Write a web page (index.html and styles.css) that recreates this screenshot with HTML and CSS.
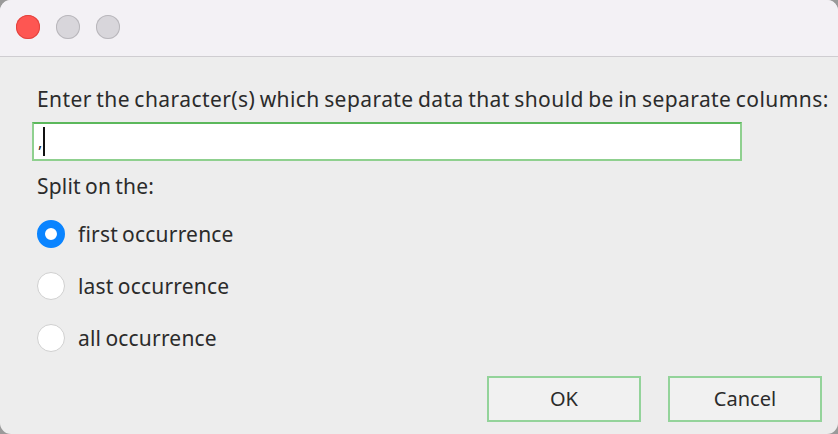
FILE: index.html
```html
<!DOCTYPE html>
<html lang="en">
<head>
  <meta charset="UTF-8">
  <title>Split Column</title>
  <link rel="stylesheet" href="styles.css">
</head>
<body>
  <div class="window">
    <!-- Title bar with traffic lights -->
    <div class="titlebar">
      <span class="light close"></span>
      <span class="light"></span>
      <span class="light"></span>
    </div>

    <div class="content">
      <label class="prompt">Enter the character(s) which separate data that should be in separate columns:</label>
      <div class="field">,<span class="caret"></span></div>

      <p class="split-label">Split on the:</p>
      <div class="options">
        <div class="option"><span class="radio checked"></span>first occurrence</div>
        <div class="option"><span class="radio"></span>last occurrence</div>
        <div class="option"><span class="radio"></span>all occurrence</div>
      </div>

      <div class="buttons">
        <button class="btn">OK</button>
        <button class="btn">Cancel</button>
      </div>
    </div>
  </div>
</body>
</html>
```

FILE: styles.css
```css
html, body {
  margin: 0;
  height: 100%;
}

body {
  background: #9a9a9a;
  font-family: "Noto Sans", "Open Sans", sans-serif;
  color: #2b2b2b;
}

.window {
  height: 100%;
  box-sizing: border-box;
  background: #ededed;
  border-radius: 11px;
  overflow: hidden;
  display: flex;
  flex-direction: column;
}

.titlebar {
  height: 57px;
  flex: none;
  background: #f3f1f5;
  border-bottom: 1px solid #cfcdd1;
  display: flex;
  align-items: center;
  gap: 16px;
  padding-left: 16px;
  padding-bottom: 2px;
  box-sizing: border-box;
}

.light {
  width: 24px;
  height: 24px;
  border-radius: 50%;
  background: #d8d6db;
  box-shadow: inset 0 0 0 1px #b9b7bc;
}

.light.close {
  background: #fe5652;
  box-shadow: inset 0 0 0 1px #e2443f;
}

.content {
  flex: 1;
  padding: 28px 0 0 32px;
  display: flex;
  flex-direction: column;
}

.prompt,
.split-label,
.option {
  font-size: 21px;
  letter-spacing: 0.2px;
  word-spacing: -1.5px;
  line-height: 28px;
}

.prompt {
  margin-left: 5px;
  letter-spacing: 0.43px;
}

.field {
  margin-top: 9px;
  width: 710px;
  height: 39px;
  box-sizing: border-box;
  background: #fff;
  border: 2px solid #8fd08f;
  border-top-color: #5cb85c;
  display: flex;
  align-items: center;
  padding-left: 4px;
  font-size: 16px;
  color: #222;
}

.caret {
  display: inline-block;
  width: 2px;
  height: 29px;
  background: #111;
  margin-left: 1px;
}

.split-label {
  margin: 11px 0 0 5px;
}

.options {
  margin-top: 20px;
  display: flex;
  flex-direction: column;
  gap: 24px;
}

.option {
  display: flex;
  align-items: center;
  gap: 13px;
  height: 28px;
  margin-left: 5px;
}

.radio {
  width: 28px;
  height: 28px;
  box-sizing: border-box;
  border-radius: 50%;
  background: #fff;
  border: 1px solid #d0d0d0;
}

.radio.checked {
  border: 8px solid #0a84ff;
  background: #fff;
}

.buttons {
  margin-top: auto;
  margin-bottom: 12px;
  display: flex;
  justify-content: flex-end;
  gap: 27px;
  padding-right: 16px;
}

.btn {
  width: 154px;
  height: 46px;
  padding-bottom: 3px;
  background: #f1f1f1;
  border: 2px solid #93d39a;
  font-family: inherit;
  font-size: 20px;
  color: #2b2b2b;
  cursor: pointer;
}
```
